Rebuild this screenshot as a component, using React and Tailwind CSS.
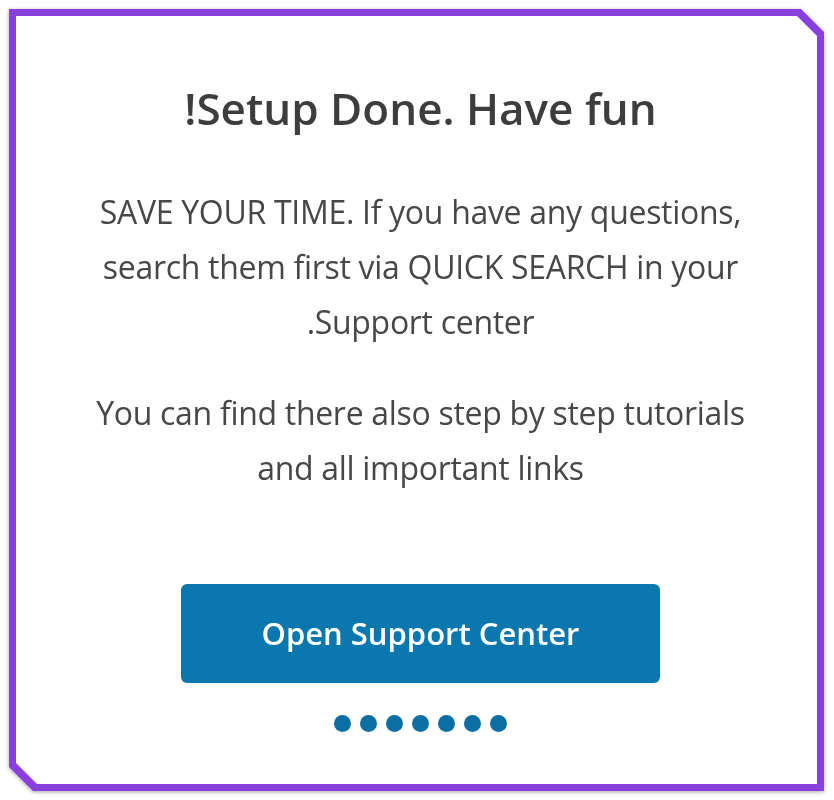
export default function App() {
  const dots = [0, 1, 2, 3, 4, 5, 6];

  return (
    <div className="w-[834px] h-[800px] bg-white p-[9px] pr-[10px] font-['Open_Sans','Noto_Sans',sans-serif]">
      <div className="h-full [filter:drop-shadow(0_1px_2px_rgba(0,0,0,0.35))]">
        <div className="h-full bg-[#8a3fdf] p-[7px] [clip-path:polygon(0_0,calc(100%-23px)_0,100%_23px,100%_100%,24px_100%,0_calc(100%-24px))]">
          <div className="h-full bg-white flex flex-col items-center pt-[64px] pl-[8px] [clip-path:polygon(0_0,calc(100%-20px)_0,100%_20px,100%_100%,21px_100%,0_calc(100%-21px))]">
            <h1 className="text-[44px] leading-[56px] font-semibold text-[#3d3d3d] whitespace-nowrap">
              !Setup Done. Have fun
            </h1>

            <p className="mt-[48px] text-[32px] leading-[55px] text-[#474747] text-center whitespace-nowrap tracking-[-0.3px]">
              SAVE YOUR TIME. If you have any questions,
              <br />
              search them first via QUICK SEARCH in your
              <br />
              .Support center
            </p>

            <p className="mt-[36px] text-[32px] leading-[55px] text-[#474747] text-center whitespace-nowrap tracking-[-0.3px]">
              You can find there also step by step tutorials
              <br />
              and all important links
            </p>

            <button className="mt-[89px] w-[479px] h-[99px] rounded-[6px] bg-[#0a78ae] text-white text-[31px] font-semibold shrink-0">
              Open Support Center
            </button>

            <div className="mt-[32px] flex gap-[9px]">
              {dots.map((d) => (
                <span key={d} className="w-[17px] h-[17px] rounded-full bg-[#0b6fa3]" />
              ))}
            </div>
          </div>
        </div>
      </div>
    </div>
  );
}
